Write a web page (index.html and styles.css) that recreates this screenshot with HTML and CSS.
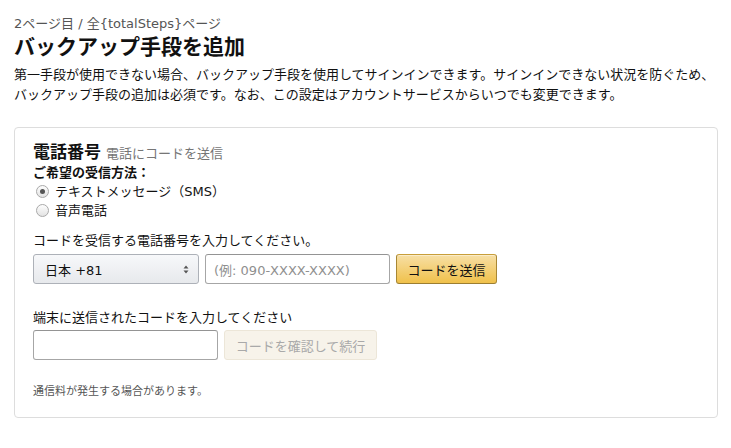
FILE: index.html
```html
<!DOCTYPE html>
<html lang="ja">
<head>
<meta charset="utf-8">
<title>バックアップ手段を追加</title>
<link rel="stylesheet" href="styles.css">
</head>
<body>
<div class="page">
  <div class="step">2ページ目 / 全{totalSteps}ページ</div>
  <h1 class="title">バックアップ手段を追加</h1>
  <p class="desc">第一手段が使用できない場合、バックアップ手段を使用してサインインできます。サインインできない状況を防ぐため、<br>バックアップ手段の追加は必須です。なお、この設定はアカウントサービスからいつでも変更できます。</p>

  <div class="card">
    <div class="card-head"><span class="card-title">電話番号</span><span class="card-sub">電話にコードを送信</span></div>
    <div class="pref">ご希望の受信方法：</div>
    <label class="radio-row"><span class="radio checked"></span>テキストメッセージ（SMS）</label>
    <label class="radio-row"><span class="radio"></span>音声電話</label>

    <div class="field-label first">コードを受信する電話番号を入力してください。</div>
    <div class="row">
      <div class="select">日本 +81
        <svg class="sel-arrow" width="6" height="9" viewBox="0 0 6 9"><path d="M3 0.5 L5.5 3.5 H0.5 Z M3 8.5 L5.5 5.5 H0.5 Z" fill="#555"/></svg>
      </div>
      <div class="input phone"><span class="ph">(例: 090-XXXX-XXXX)</span></div>
      <div class="btn primary send">コードを送信</div>
    </div>

    <div class="field-label second">端末に送信されたコードを入力してください</div>
    <div class="row tight">
      <div class="input code"></div>
      <div class="btn disabled verify">コードを確認して続行</div>
    </div>

    <div class="note">通信料が発生する場合があります。</div>
  </div>
</div>
</body>
</html>
```

FILE: styles.css
```css
html, body {
  margin: 0;
  padding: 0;
  background: #fff;
}
body {
  font-family: "DejaVu Sans", "Noto Sans CJK JP", sans-serif;
  color: #111;
  font-size: 13px;
}
.page {
  padding: 15px 13px 0 14px;
}
.step {
  font-size: 13px;
  line-height: 18px;
  color: #555;
}
.title {
  margin: 1px 0 0;
  font-size: 21px;
  line-height: 26px;
  font-weight: 700;
  color: #111;
}
.desc {
  margin: 5px 0 0;
  font-size: 13px;
  line-height: 20px;
  color: #111;
}
.card {
  margin-top: 22px;
  border: 1px solid #ddd;
  border-radius: 4px;
  padding: 12px 18px 17px 18px;
}
.card-head {
  line-height: 24px;
  height: 24px;
  display: flex;
  align-items: baseline;
  gap: 5px;
}
.card-title {
  font-size: 17px;
  font-weight: 700;
}
.card-sub {
  font-size: 13px;
  color: #767676;
}
.pref {
  font-weight: 700;
  line-height: 18px;
}
.radio-row {
  display: flex;
  align-items: center;
  height: 19px;
  line-height: 19px;
  gap: 6px;
  padding-left: 3px;
}
.radio {
  width: 11px;
  height: 11px;
  border-radius: 50%;
  border: 1px solid #a9a9a9;
  background: linear-gradient(#fdfdfd, #e3e3e3);
  position: relative;
  flex: none;
}
.radio.checked::after {
  content: "";
  position: absolute;
  left: 3px;
  top: 3px;
  width: 5px;
  height: 5px;
  border-radius: 50%;
  background: #555;
}
.field-label {
  line-height: 18px;
}
.field-label.first { margin-top: 12px; }
.field-label.second { margin-top: 25px; }
.row {
  display: flex;
  gap: 6px;
  margin-top: 4px;
  height: 30px;
}
.row.tight { margin-top: 3px; }
.select {
  width: 166px;
  box-sizing: border-box;
  height: 30px;
  border: 1px solid #adb1b8;
  border-radius: 3px;
  background: linear-gradient(#f7f8fa, #e7e9ec);
  padding-left: 11px;
  display: flex;
  align-items: center;
  position: relative;
  color: #111;
}
.sel-arrow {
  position: absolute;
  right: 9px;
  top: 10px;
}
.input {
  box-sizing: border-box;
  height: 30px;
  border: 1px solid #a6a6a6;
  border-top-color: #949494;
  border-radius: 3px;
  background: #fff;
  padding-left: 8px;
  display: flex;
  align-items: center;
}
.input.phone { width: 185px; }
.input.code { width: 185px; }
.ph { color: #8f8f8f; }
.btn {
  box-sizing: border-box;
  height: 30px;
  border-radius: 3px;
  display: flex;
  align-items: center;
  justify-content: center;
}
.btn.primary {
  border: 1px solid #a88734;
  border-color: #c89e3a #a88734 #9c7e31;
  background: linear-gradient(#f7dfa5, #f0c14b);
  color: #111;
  box-shadow: inset 0 1px 0 rgba(255,255,255,0.4);
}
.send { width: 101px; }
.btn.disabled {
  border: 1px solid #ece6d8;
  background: #f7f3ea;
  color: #a9a9a9;
}
.verify { width: 153px; }
.note {
  margin-top: 24px;
  font-size: 11px;
  line-height: 16px;
  color: #555;
}
```
